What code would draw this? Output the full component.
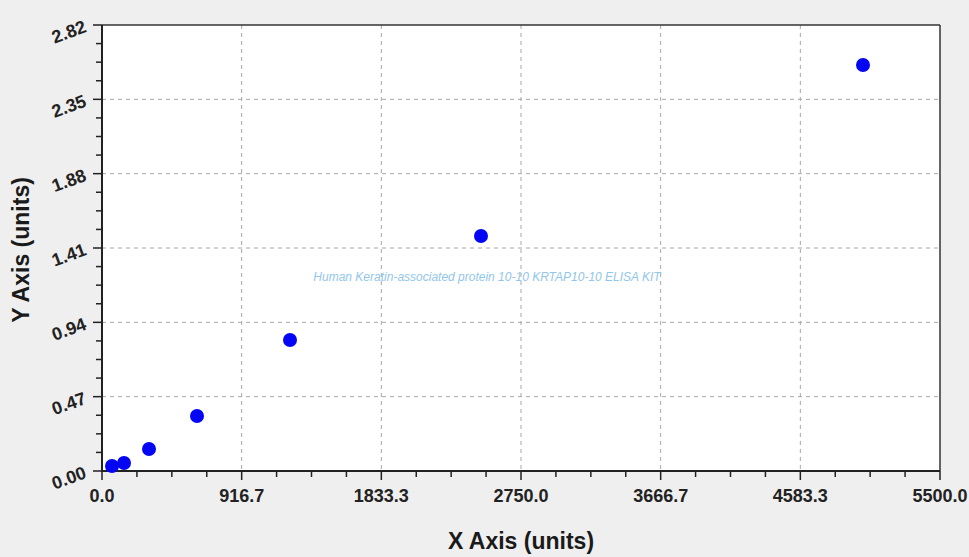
import React from "react";

// plot box in page pixels
const L = 102;
const T = 25;
const R = 940;
const B = 471;

const yTicks = ["0.00", "0.47", "0.94", "1.41", "1.88", "2.35", "2.82"];
const xTicks = ["0.0", "916.7", "1833.3", "2750.0", "3666.7", "4583.3", "5500.0"];

const points = [
  [112, 466],
  [124, 463],
  [149, 449],
  [197, 416],
  [290, 340],
  [481, 236],
  [863, 65],
];

function yAt(i) {
  return B - (i * (B - T)) / 6;
}
function xAt(i) {
  return L + (i * (R - L)) / 6;
}

export default function App() {
  return (
    <div className="w-[969px] h-[557px] bg-[#efefef] overflow-hidden font-['Liberation_Sans',Arial,sans-serif]">
      <svg width="969" height="557" viewBox="0 0 969 557" className="block">
        <rect x={L} y={T} width={R - L} height={B - T} fill="#ffffff" />

        {/* grid */}
        {yTicks.map((_, i) =>
          i > 0 && i < 6 ? (
            <line
              key={"gy" + i}
              x1={L}
              x2={R}
              y1={yAt(i)}
              y2={yAt(i)}
              stroke="#a8a8a8"
              strokeDasharray="4 4"
            />
          ) : null
        )}
        {xTicks.map((_, i) =>
          i > 0 && i < 6 ? (
            <line
              key={"gx" + i}
              x1={xAt(i)}
              x2={xAt(i)}
              y1={T}
              y2={B}
              stroke="#a8a8a8"
              strokeDasharray="4 4"
            />
          ) : null
        )}

        {/* watermark */}
        <text
          x="487"
          y="281"
          textAnchor="middle"
          fontSize="12"
          fontStyle="italic"
          fill="#92c6ea"
        >
          Human Keratin-associated protein 10-10 KRTAP10-10 ELISA KIT
        </text>

        {/* frame */}
        <line x1={L} x2={R} y1={T} y2={T} stroke="#333" strokeWidth="1.5" />
        <line x1={R} x2={R} y1={T} y2={B} stroke="#333" strokeWidth="1.5" />
        <line x1={L} x2={L} y1={T} y2={B + 1} stroke="#222" strokeWidth="2" />
        <line x1={L - 1} x2={R} y1={B} y2={B} stroke="#222" strokeWidth="2" />

        {/* y ticks */}
        {Array.from({ length: 25 }).map((_, k) => {
          const y = B - (k * (B - T)) / 24;
          const major = k % 4 === 0;
          return (
            <line
              key={"ty" + k}
              x1={major ? L - 9 : L - 6}
              x2={L}
              y1={y}
              y2={y}
              stroke="#222"
              strokeWidth="1.5"
            />
          );
        })}
        {/* x ticks */}
        {Array.from({ length: 25 }).map((_, k) => {
          const x = L + (k * (R - L)) / 24;
          const major = k % 4 === 0;
          return (
            <line
              key={"tx" + k}
              x1={x}
              x2={x}
              y1={B}
              y2={major ? B + 9 : B + 6}
              stroke="#222"
              strokeWidth="1.5"
            />
          );
        })}

        {/* y labels */}
        {yTicks.map((t, i) => (
          <text
            key={"ly" + t}
            transform={`translate(69 ${yAt(i) + 7}) rotate(-20)`}
            textAnchor="middle"
            dominantBaseline="central"
            fontSize="18"
            fontWeight="700"
            fill="#222"
          >
            {t}
          </text>
        ))}

        {/* x labels */}
        {xTicks.map((t, i) => (
          <text
            key={"lx" + t}
            x={xAt(i)}
            y="502"
            textAnchor="middle"
            fontSize="18"
            fontWeight="700"
            fill="#222"
          >
            {t}
          </text>
        ))}

        {/* titles */}
        <text
          x="521"
          y="549"
          textAnchor="middle"
          fontSize="23"
          fontWeight="700"
          fill="#1a1a1a"
        >
          X Axis (units)
        </text>
        <text
          transform="translate(29 250) rotate(-90)"
          textAnchor="middle"
          fontSize="23"
          fontWeight="700"
          fill="#1a1a1a"
        >
          Y Axis (units)
        </text>

        {/* data */}
        {points.map(([x, y], i) => (
          <circle key={"p" + i} cx={x} cy={y} r="7" fill="#0505f5" />
        ))}
      </svg>
    </div>
  );
}
